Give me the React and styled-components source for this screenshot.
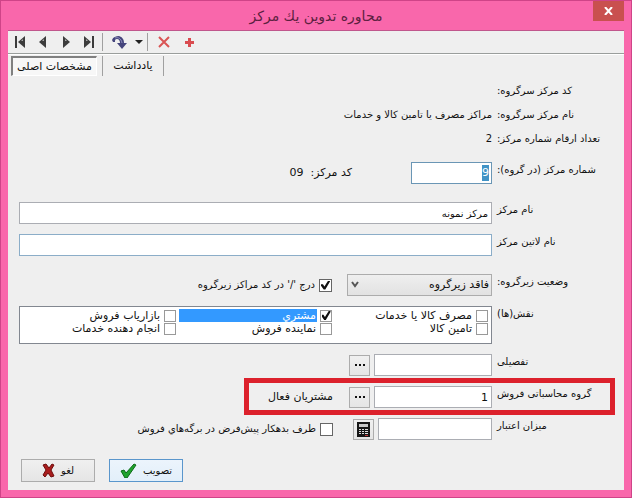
import React, { useState } from "react";
import styled, { createGlobalStyle, css } from "styled-components";

const GlobalStyle = createGlobalStyle`
  * {
    box-sizing: border-box;
  }
  body {
    margin: 0;
    background: #f967ab;
    color: #111;
    font-family: "DejaVu Sans", "Noto Sans", sans-serif;
    font-size: 11px;
    line-height: 16px;
  }
  button, input, select {
    margin: 0;
    font: inherit;
    color: inherit;
  }
`;

const Window = styled.div`
  display: flex;
  flex-direction: column;
  min-height: 100vh;
  padding: 0 7px 7px;
  background: #f967ab;
  border: 1px solid #cf4488;
`;

const TitleBar = styled.header`
  display: grid;
  grid-template-columns: 1fr auto 1fr;
  height: 29px;
`;

const Title = styled.h1`
  grid-column: 2;
  margin: 0;
  font-size: 14px;
  font-weight: normal;
  line-height: 30px;
  color: #5c1f40;
`;

const CloseButton = styled.button`
  display: grid;
  place-items: center;
  justify-self: end;
  width: 31px;
  height: 20px;
  padding: 0;
  border: 0;
  background: #c9504f;
`;

const Body = styled.main`
  flex: 1;
  background: #efefef;
  border-top: 1px solid #c0568c;
`;

const Toolbar = styled.div`
  display: flex;
  align-items: center;
  height: 23px;
  border-bottom: 1px solid #9a9e9c;
`;

const ToolButton = styled.button`
  display: grid;
  place-items: center;
  width: ${(props) => props.$width || 23}px;
  height: 20px;
  padding: 0;
  border: 0;
  background: none;
`;

const Separator = styled.span`
  width: 1px;
  height: ${(props) => props.$height || 18}px;
  margin: 0 2px;
  background: #a0a0a0;
`;

const Tabs = styled.div`
  display: flex;
  align-items: center;
  height: 23px;
  padding-left: 3px;
  border-top: 1px solid #fff;
`;

const Tab = styled.button`
  height: 20px;
  width: ${(props) => (props.$active ? 86 : 56)}px;
  margin-right: ${(props) => (props.$active ? 3 : 0)}px;
  padding: 0;
  border: 0;
  background: none;
  white-space: nowrap;
  ${(props) =>
    props.$active &&
    css`
      background: #f7f7f7;
      border: 1px solid #fff;
      border-top: 2px solid #808080;
      border-left: 2px solid #808080;
    `}
`;

const Form = styled.form`
  display: flex;
  flex-direction: column;
  gap: 18px;
  padding-left: 11px;
  font-size: 10px;
`;

const Section = styled.div`
  display: flex;
  flex-direction: column;
  gap: 10px;
`;

const Info = styled.dl`
  margin: 2px 0 -7px;
`;

// ستون برچسب در سمت راست، ستون ورودی در سمت چپ
const Row = styled.div`
  position: relative;
  display: grid;
  grid-template-columns: 132px 1fr;
`;

const InfoRow = styled(Row)`
  line-height: 24px;

  dt {
    padding-left: 5px;
    text-align: left;
    white-space: nowrap;
  }
  dd {
    margin: 0;
  }
`;

const Label = styled.label`
  padding-left: 5px;
  text-align: left;
  white-space: nowrap;
`;

const Controls = styled.div`
  display: flex;
  align-items: center;
  gap: 4px;
  min-width: 0;
`;

const TextInput = styled.input`
  flex: ${(props) => (props.$width ? "none" : 1)};
  width: ${(props) => (props.$width ? `${props.$width}px` : "100%")};
  height: 22px;
  padding: 0 3px;
  background: #fff;
  border: 1px solid ${(props) => (props.$focus ? "#8badc8" : "#abadb3")};
  border-radius: 0;
  outline: 0;
`;

const NumberInput = styled(TextInput)`
  font-size: 11px;
`;

const NumberBox = styled.div`
  display: flex;
  align-items: center;
  width: 81px;
  height: 22px;
  padding: 0 2px;
  background: #fff;
  border: 1px solid #6a96b5;

  input {
    width: 7px;
    height: 16px;
    padding: 0;
    border: 0;
    outline: 0;
    background: #4193c6;
    color: #fff;
    font-size: 11px;
  }
`;

const CodeText = styled.span`
  margin-right: 55px;
  font-size: 11px;
`;

const SelectBox = styled.div`
  position: relative;
  width: 145px;
  margin-left: 11px;

  select {
    appearance: none;
    display: block;
    width: 100%;
    height: 22px;
    padding: 0 2px 0 20px;
    border: 1px solid #acacac;
    border-radius: 0;
    background: linear-gradient(#efefef, #e2e2e2);
    font-size: 11px;
  }
  svg {
    position: absolute;
    left: 4px;
    top: 7px;
    pointer-events: none;
  }
`;

const CheckInput = styled.input`
  appearance: none;
  flex: none;
  display: grid;
  place-items: center;
  width: ${(props) => props.$size || 13}px;
  height: ${(props) => props.$size || 13}px;
  border: 1px solid ${(props) => (props.$size ? "#999" : "#666")};
  background: #fff;

  &:checked::after {
    content: "";
    width: 9px;
    height: 9px;
    background: #111;
    clip-path: polygon(0 42%, 22% 42%, 38% 66%, 80% 0, 100% 0, 100% 12%, 48% 100%, 30% 100%, 0 58%);
  }
`;

const CheckLabel = styled.label`
  white-space: nowrap;
`;

const Roles = styled.fieldset`
  display: grid;
  grid-template-columns: repeat(3, 1fr);
  align-content: start;
  min-width: 0;
  height: 38px;
  margin: 0;
  padding: 2px 3px 0 0;
  border: 1px solid #828790;
  background: #fff;
`;

const Role = styled.div`
  display: flex;
  align-items: center;
  gap: 3px;
  height: 13px;
`;

const RoleLabel = styled.label`
  flex: 1;
  height: 13px;
  margin-left: 3px;
  padding-right: 1px;
  font-size: 11px;
  line-height: 13px;
  white-space: nowrap;
  background: ${(props) => (props.$selected ? "#3399ff" : "none")};
  color: ${(props) => (props.$selected ? "#fff" : "inherit")};
`;

const SmallButton = styled.button`
  display: grid;
  place-items: center;
  width: 21px;
  height: 21px;
  padding: 0;
  border: 1px solid #acacac;
  background: linear-gradient(#f0f0f0, #e5e5e5);
`;

const Note = styled.span`
  margin-right: 12px;
  font-size: 11px;
`;

// کادر قرمز دور ردیف گروه محاسباتی
const Highlight = styled.div`
  position: absolute;
  top: -8px;
  right: 9px;
  width: 371px;
  height: 37px;
  border: 5px solid #dc212c;
  pointer-events: none;
`;

const Actions = styled.div`
  display: flex;
  justify-content: flex-end;
  gap: 14px;
  padding: 1px 0 8px 2px;
`;

const ActionButton = styled.button`
  display: flex;
  align-items: center;
  justify-content: center;
  gap: 6px;
  width: 74px;
  height: 23px;
  padding: 0;
  border: 1px solid ${(props) => (props.$primary ? "#5a96cc" : "#acacac")};
  background: ${(props) =>
    props.$primary ? "linear-gradient(#ecf4fc, #e2effa)" : "linear-gradient(#f0f0f0, #e5e5e5)"};
`;

const Arrow = ({ flip, bar }) => (
  <svg width="12" height="12" viewBox="0 0 12 12">
    <g transform={flip ? "translate(12 0) scale(-1 1)" : undefined}>
      {bar && <path d="M1 0h2v12H1z" fill="#3c3c3c" />}
      <path d={bar ? "M11 0v12L4 6z" : "M9 0v12L2 6z"} fill="#3c3c3c" />
      <path d={bar ? "M7 5l2-2v2z" : "M5 5l2-2v2z"} fill="#aaa" />
    </g>
  </svg>
);

const Chevron = () => (
  <svg width="8" height="7" viewBox="0 0 8 7">
    <path d="M1 1l3 4 3-4" fill="none" stroke="#555" strokeWidth="2" />
  </svg>
);

const Dots = () => (
  <svg width="12" height="2" viewBox="0 0 12 2">
    <path d="M1 0h2v2H1zM5 0h2v2H5zM9 0h2v2H9z" fill="#111" />
  </svg>
);

const Calculator = () => (
  <svg width="13" height="15" viewBox="0 0 13 15">
    <path d="M0 0h13v15H0z" fill="#161616" />
    <path d="M2 2h9v3H2z" fill="#c8c8c8" />
    <path
      d="M2 7h2v1H2zM5 7h2v1H5zM8 7h3v1H8zM2 9h2v1H2zM5 9h2v1H5zM8 9h3v1H8zM2 11h2v1H2zM5 11h2v1H5zM8 11h3v1H8z"
      fill="#ddd"
    />
    <path d="M8 13h3v1H8z" fill="#c43a3a" />
  </svg>
);

const ROLES = [
  { id: "consume", label: "مصرف کالا یا خدمات" },
  { id: "customer", label: "مشتري" },
  { id: "marketer", label: "بازاریاب فروش" },
  { id: "supply", label: "تامین کالا" },
  { id: "agent", label: "نماینده فروش" },
  { id: "service", label: "انجام دهنده خدمات" },
];

export default function App() {
  const [roles, setRoles] = useState(["customer"]);

  const toggleRole = (id) =>
    setRoles((list) => (list.includes(id) ? list.filter((r) => r !== id) : [...list, id]));

  return (
    <Window>
      <GlobalStyle />
      <TitleBar>
        <Title dir="rtl">محاوره تدوین یك مرکز</Title>
        <CloseButton aria-label="بستن">
          <svg width="9" height="8" viewBox="0 0 9 8">
            <path d="M1 0l7 8M8 0L1 8" stroke="#fff" strokeWidth="2" />
          </svg>
        </CloseButton>
      </TitleBar>
      <Body>
        <Toolbar>
          <ToolButton aria-label="اولین"><Arrow bar /></ToolButton>
          <ToolButton aria-label="قبلی"><Arrow /></ToolButton>
          <ToolButton aria-label="بعدی"><Arrow flip /></ToolButton>
          <ToolButton aria-label="آخرین"><Arrow flip bar /></ToolButton>
          <Separator />
          <ToolButton $width={28} aria-label="برو به">
            <svg width="15" height="13" viewBox="0 0 15 13">
              <path d="M0 4C1 1 4 0 7 0c3 1 5 3 5 7h3l-5 6-5-6h3c0-2-1-4-3-4-2 0-2 1-2 3H1z" fill="#45457c" />
              <path d="M3 2c3-1 6 0 7 5" fill="none" stroke="#8f8fbe" />
            </svg>
          </ToolButton>
          <ToolButton $width={12} aria-label="گزینه‌ها">
            <svg width="8" height="4" viewBox="0 0 8 4">
              <path d="M0 0h8L4 4z" fill="#222" />
            </svg>
          </ToolButton>
          <Separator />
          <ToolButton $width={28} aria-label="حذف">
            <svg width="12" height="12" viewBox="0 0 12 12">
              <path d="M1 1l10 10M11 1L1 11" stroke="#d95555" strokeWidth="2" />
            </svg>
          </ToolButton>
          <ToolButton aria-label="افزودن">
            <svg width="9" height="9" viewBox="0 0 9 9">
              <path d="M3 0h3v3h3v3H6v3H3V6H0V3h3z" fill="#d94c50" />
            </svg>
          </ToolButton>
        </Toolbar>
        <Tabs role="tablist">
          <Tab $active role="tab" aria-selected="true" dir="rtl">مشخصات اصلی</Tab>
          <Separator $height={20} />
          <Tab role="tab" aria-selected="false" dir="rtl">یادداشت</Tab>
          <Separator $height={20} />
        </Tabs>

        <Form dir="rtl" onSubmit={(e) => e.preventDefault()}>
          <Info>
            <InfoRow>
              <dt>کد مرکز سرگروه:</dt>
            </InfoRow>
            <InfoRow>
              <dt>نام مرکز سرگروه:</dt>
              <dd>مراکز مصرف یا تامین کالا و خدمات</dd>
            </InfoRow>
            <InfoRow>
              <dt>تعداد ارقام شماره مرکز:</dt>
              <dd>2</dd>
            </InfoRow>
          </Info>

          <Row>
            <Label htmlFor="number">شماره مرکز (در گروه):</Label>
            <Controls>
              <NumberBox>
                <input id="number" defaultValue="9" />
              </NumberBox>
              <CodeText>کد مرکز:&nbsp; 09</CodeText>
            </Controls>
          </Row>

          <Section>
            <Row>
              <Label htmlFor="name">نام مرکز</Label>
              <TextInput id="name" defaultValue="مرکز نمونه" />
            </Row>
            <Row>
              <Label htmlFor="latin">نام لاتین مرکز</Label>
              <TextInput id="latin" $focus />
            </Row>
          </Section>

          <Section>
            <Row>
              <Label htmlFor="status">وضعیت زیرگروه:</Label>
              <Controls>
                <SelectBox>
                  <select id="status">
                    <option>فاقد زیرگروه</option>
                  </select>
                  <Chevron />
                </SelectBox>
                <CheckInput type="checkbox" id="slash" defaultChecked />
                <CheckLabel htmlFor="slash">درج '/' در کد مراکز زیرگروه</CheckLabel>
              </Controls>
            </Row>
            <Row>
              <Label as="span" id="roles">نقش(ها)</Label>
              <Roles aria-labelledby="roles">
                {ROLES.map(({ id, label }) => (
                  <Role key={id}>
                    <CheckInput
                      type="checkbox"
                      id={id}
                      $size={12}
                      checked={roles.includes(id)}
                      onChange={() => toggleRole(id)}
                    />
                    <RoleLabel htmlFor={id} $selected={id === "customer"}>{label}</RoleLabel>
                  </Role>
                ))}
              </Roles>
            </Row>
            <Row>
              <Label htmlFor="detail">تفصیلی</Label>
              <Controls>
                <TextInput id="detail" $width={118} />
                <SmallButton type="button" aria-label="انتخاب تفصیلی"><Dots /></SmallButton>
              </Controls>
            </Row>
            <Row>
              <Label htmlFor="group">گروه محاسباتی فروش</Label>
              <Controls>
                <NumberInput id="group" $width={118} defaultValue="1" />
                <SmallButton type="button" aria-label="انتخاب گروه"><Dots /></SmallButton>
                <Note>مشتریان فعال</Note>
              </Controls>
              <Highlight />
            </Row>
            <Row>
              <Label htmlFor="credit">میزان اعتبار</Label>
              <Controls>
                <TextInput id="credit" $width={114} />
                <SmallButton type="button" aria-label="ماشین حساب"><Calculator /></SmallButton>
                <Note />
                <CheckInput type="checkbox" id="debtor" />
                <CheckLabel htmlFor="debtor">طرف بدهکار پیش‌فرض در برگه‌هاي فروش</CheckLabel>
              </Controls>
            </Row>
          </Section>

          <Actions>
            <ActionButton type="submit" $primary>
              تصویب
              <svg width="17" height="15" viewBox="0 0 17 15">
                <path d="M1 8l3-1 2 3 8-9 2 1-9 13H5z" fill="#1fa32e" stroke="#0c6b18" />
              </svg>
            </ActionButton>
            <ActionButton type="button">
              لغو
              <svg width="13" height="15" viewBox="0 0 13 15">
                <path d="M1 2l3-1 3 4 3-4 2 1-3 5 3 6-3 1-3-4-3 4-2-2 3-5z" fill="#a81c1c" stroke="#6e0d0d" />
              </svg>
            </ActionButton>
          </Actions>
        </Form>
      </Body>
    </Window>
  );
}
